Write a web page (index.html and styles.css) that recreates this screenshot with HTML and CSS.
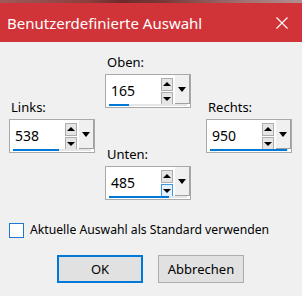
FILE: index.html
```html
<!DOCTYPE html>
<html lang="de">
<head>
  <meta charset="UTF-8">
  <title>Benutzerdefinierte Auswahl</title>
  <link rel="stylesheet" href="styles.css">
</head>
<body>
  <div class="dialog">
    <div class="shadow"></div>
    <header class="titlebar">
      <span class="title">Benutzerdefinierte Auswahl</span>
      <svg class="close" width="12" height="12" viewBox="0 0 12 12">
        <path d="M0.5 0.5 L11.5 11.5 M11.5 0.5 L0.5 11.5" stroke="#fff" stroke-width="1.1" fill="none"/>
      </svg>
    </header>

    <main class="content">
      <div class="cross">
        <div class="col side">
          <div class="field">
            <label>Links:</label>
            <div class="spin">
              <span class="value">538</span>
              <div class="arrows">
                <span class="arrow up"></span>
                <span class="arrow down"></span>
              </div>
              <span class="drop"></span>
              <div class="track"><div class="fill" style="width: 46px"></div></div>
            </div>
          </div>
        </div>

        <div class="col middle">
          <div class="field">
            <label>Oben:</label>
            <div class="spin">
              <span class="value">165</span>
              <div class="arrows">
                <span class="arrow up"></span>
                <span class="arrow down"></span>
              </div>
              <span class="drop"></span>
              <div class="track"><div class="fill" style="width: 20px"></div></div>
            </div>
          </div>
          <div class="field lower">
            <label>Unten:</label>
            <div class="spin">
              <span class="value">485</span>
              <div class="arrows">
                <span class="arrow up"></span>
                <span class="arrow down hover"></span>
              </div>
              <span class="drop"></span>
              <div class="track"><div class="fill" style="width: 60px"></div></div>
            </div>
          </div>
        </div>

        <div class="col side right">
          <div class="field">
            <label>Rechts:</label>
            <div class="spin">
              <span class="value">950</span>
              <div class="arrows">
                <span class="arrow up"></span>
                <span class="arrow down"></span>
              </div>
              <span class="drop"></span>
              <div class="track"><div class="fill" style="width: 77px"></div></div>
            </div>
          </div>
        </div>
      </div>

      <div class="check-row">
        <span class="checkbox"></span>
        <span>Aktuelle Auswahl als Standard verwenden</span>
      </div>

      <div class="buttons">
        <button class="btn default">OK</button>
        <button class="btn">Abbrechen</button>
      </div>
    </main>
  </div>
</body>
</html>
```

FILE: styles.css
```css
body {
  margin: 0;
  font-family: 'Noto Sans', 'Open Sans', sans-serif;
  background: #f0f0f0;
  color: #000;
}

.dialog {
  width: 302px;
  height: 296px;
  background: #f0f0f0;
  overflow: hidden;
}

.shadow {
  height: 3px;
  background: linear-gradient(to right, #a05a5a, #8a3e3e 30%, #6e2a2a 40%, #7a3a3a 55%, #a07070 80%, #b09090);
}

.titlebar {
  height: 39px;
  background: #d13438;
  display: flex;
  align-items: center;
  justify-content: space-between;
  padding: 0 14px 0 7px;
  color: #fff;
}

.title {
  font-size: 15px;
}

.close {
  display: block;
}

.content {
  padding: 12px 0 0 9px;
}

.cross {
  display: flex;
  font-size: 13px;
}

.col {
  display: flex;
  flex-direction: column;
}

.side {
  padding-top: 45px;
}

.middle {
  margin-left: 10px;
}

.right {
  margin-left: 15px;
}

.field label {
  display: block;
  height: 16px;
  line-height: 16px;
  margin: 0 0 4px 2px;
}

.field.lower {
  margin-top: 38px;
}

.spin {
  position: relative;
  width: 84px;
  height: 32px;
  border: 1px solid #a9a9a9;
  background: #fff;
}

.value {
  position: absolute;
  left: 5px;
  top: 7px;
  font-size: 14px;
  line-height: 18px;
}

.arrows {
  position: absolute;
  left: 55px;
  top: 3px;
  display: flex;
  flex-direction: column;
  gap: 1px;
}

.arrow {
  display: block;
  width: 10px;
  height: 11px;
  border: 1px solid #adadad;
  background: #e5e5e5;
  position: relative;
}

.arrow::after {
  content: '';
  position: absolute;
  left: 1px;
  border-left: 4px solid transparent;
  border-right: 4px solid transparent;
}

.arrow.up::after {
  top: 3px;
  border-bottom: 4px solid #000;
}

.arrow.down::after {
  top: 4px;
  border-top: 4px solid #000;
}

.arrow.hover {
  background: #e5f1fb;
  border-color: #3c9be8;
}

.drop {
  position: absolute;
  left: 69px;
  top: 0;
  width: 14px;
  height: 28px;
  background: #f0f0f0;
  border-right: 1px solid #a0a0a0;
  border-bottom: 1px solid #a0a0a0;
}

.drop::after {
  content: '';
  position: absolute;
  left: 3px;
  top: 12px;
  border-left: 4px solid transparent;
  border-right: 4px solid transparent;
  border-top: 5px solid #000;
}

.track {
  position: absolute;
  left: 3px;
  right: 3px;
  bottom: 1px;
  height: 2px;
  background: #e6e6e6;
}

.fill {
  height: 100%;
  background: #0078d7;
}

.check-row {
  display: flex;
  align-items: center;
  gap: 6px;
  margin-top: 22px;
  font-size: 12.2px;
  line-height: 16px;
}

.checkbox {
  width: 13px;
  height: 13px;
  border: 1px solid #1e78d0;
  background: #fff;
}

.buttons {
  display: flex;
  gap: 15px;
  margin: 17px 0 0 48px;
}

.btn {
  width: 86px;
  height: 28px;
  border: 1px solid #adadad;
  background: #e1e1e1;
  font-family: inherit;
  font-size: 13px;
  color: #000;
  padding: 0;
}

.btn.default {
  border: 2px solid #0078d7;
}
```
